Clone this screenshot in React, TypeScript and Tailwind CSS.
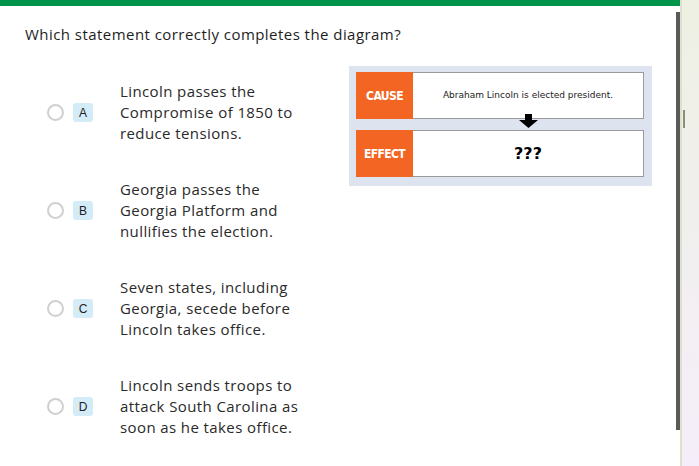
const options = [
  { letter: "A", lines: ["Lincoln passes the", "Compromise of 1850 to", "reduce tensions."] },
  { letter: "B", lines: ["Georgia passes the", "Georgia Platform and", "nullifies the election."] },
  { letter: "C", lines: ["Seven states, including", "Georgia, secede before", "Lincoln takes office."] },
  { letter: "D", lines: ["Lincoln sends troops to", "attack South Carolina as", "soon as he takes office."] },
]

function Option({ letter, lines }: { letter: string; lines: string[] }) {
  return (
    <div className="flex items-center">
      <div className="w-[17px] h-[17px] rounded-full border-2 border-[#d0d0d0] bg-white" />
      <div className="ml-[9px] w-[20px] h-[19px] rounded-[3px] bg-[#d3ecf8] flex items-center justify-center text-[12px] text-[#222] font-['Liberation_Sans',sans-serif]">
        {letter}
      </div>
      <div className="ml-[27px] text-[15px] leading-[21px] tracking-[0.4px] text-[#2a2a2a]">
        {lines.map((l) => (
          <div key={l}>{l}</div>
        ))}
      </div>
    </div>
  )
}

function Row({ label, children }: { label: string; children: React.ReactNode }) {
  return (
    <div className="flex h-[47px]">
      <div className="w-[57px] bg-[#f26522] flex items-center justify-center text-white font-bold text-[12px] tracking-[-0.6px] font-['DejaVu_Sans_Condensed','Liberation_Sans_Narrow',sans-serif]">
        {label}
      </div>
      <div className="flex-1 bg-white border border-l-0 border-[#9a9a9a] flex items-center justify-center">
        {children}
      </div>
    </div>
  )
}

export default function App() {
  return (
    <div className="flex w-[699px] h-[466px] bg-white font-['Open_Sans',sans-serif] overflow-hidden">
      <div className="w-[680px] flex flex-col">
        <div className="h-[6px] bg-[#00934a]" />
        <div className="flex flex-1">
          <div className="flex-1">
            <div className="pl-[25px] pt-[17px] text-[15px] leading-[22px] tracking-[0.45px] text-[#1e1e1e]">
              Which statement correctly completes the diagram?
            </div>
            <div className="flex mt-[21px]">
              <div className="pl-[47px] pt-[15px] w-[349px] flex flex-col gap-[35px]">
                {options.map((o) => (
                  <Option key={o.letter} {...o} />
                ))}
              </div>
              <div className="relative w-[303px] h-[120px] bg-[#dde3ef] pt-[6px] pl-[7px] pr-[8px] flex flex-col gap-[11px]">
                <Row label="CAUSE">
                  <span className="text-[9px] text-[#222] font-['DejaVu_Sans',sans-serif]">
                    Abraham Lincoln is elected president.
                  </span>
                </Row>
                <Row label="EFFECT">
                  <span className="text-[16px] font-bold text-black font-['DejaVu_Sans',sans-serif]">???</span>
                </Row>
                <svg className="absolute left-[170px] top-[48px]" width="19" height="14" viewBox="0 0 19 14">
                  <path d="M6 0 H13 V6 H19 L9.5 14 L0 6 H6 Z" fill="#000" />
                </svg>
              </div>
            </div>
          </div>
          <div className="w-[4px] mt-[6px] h-[418px] bg-[#5a5a5a]" />
        </div>
      </div>
      <div className="relative w-[19px] h-[466px] bg-gradient-to-b from-[#eef0e3] to-[#f5eefa] border-l-2 border-[#dde2cc]">
        <div className="absolute left-[1px] top-[110px] w-[2px] h-[18px] bg-[#8a8f78]" />
      </div>
    </div>
  )
}
